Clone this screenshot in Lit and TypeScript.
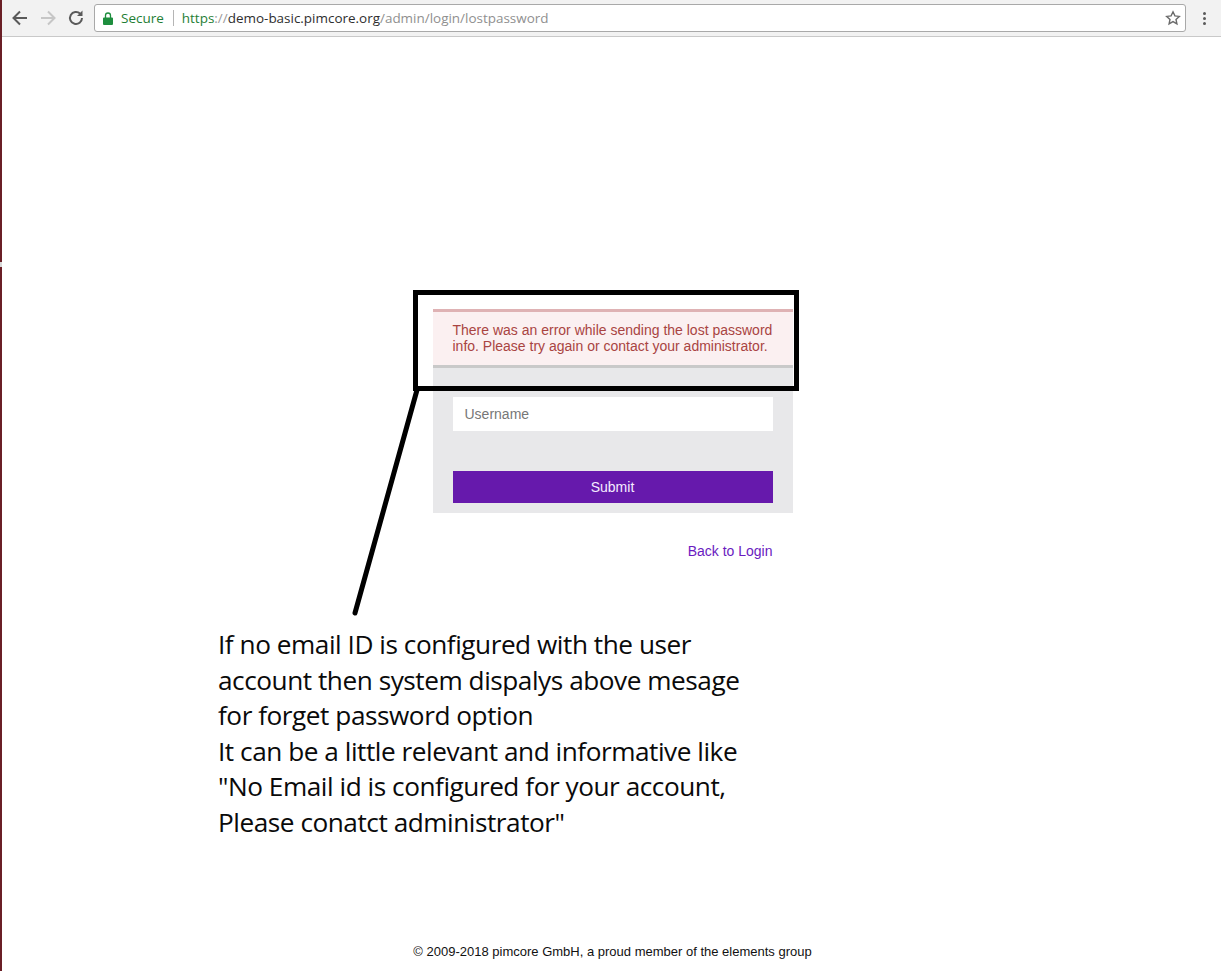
import { LitElement, html, css, svg } from "lit";
import { customElement } from "lit/decorators.js";

@customElement("app-root")
export class AppRoot extends LitElement {
  static styles = css`
    :host { display: block; position: relative; height: 971px; overflow: hidden; background: #fff; font-family: "Liberation Sans", Arial, sans-serif; }
    .edge { position: absolute; left: 0; top: 0; bottom: 0; width: 2px; background: #6a1f26; z-index: 3; }
    .notch { position: absolute; left: 0; top: 262px; width: 2px; height: 5px; background: #d8d8d8; }
    .toolbar { height: 36px; background: #f2f2f2; border-bottom: 1px solid #c9c9c9; display: flex; align-items: center; padding: 0 0 0 10px; box-sizing: content-box; }
    .nav { width: 20px; height: 20px; flex: none; margin-right: 8px; }
    .omni { flex: none; width: 1092px; height: 28px; box-sizing: border-box; background: #fff; border: 1px solid #a9a9a9; border-radius: 3px; display: flex; align-items: center; padding: 0 0 0 8px; font: 13.46px/20px "Open Sans", "Noto Sans", sans-serif; white-space: nowrap; }
    .lock { width: 10px; height: 13px; margin-right: 8px; flex: none; }
    .secure { color: #1e7e34; font-size: 13.5px; }
    .sep { width: 1px; height: 16px; background: #b5b5b5; margin: 0 8px 0 9px; }
    .https { color: #1e7e34; }
    .slashes { color: #9a9a9a; }
    .host { color: #2e2e2e; }
    .path { color: #8f8f8f; }
    .spacer { flex: 1; }
    .star { width: 16px; height: 16px; margin-right: 4px; }
    .menu { width: 4px; margin-left: 16px; display: flex; flex-direction: column; gap: 2px; align-items: center; }
    .menu i { width: 3px; height: 3px; background: #5a5a5a; border-radius: 50%; display: block; }
    .page { display: flex; flex-direction: column; align-items: center; padding-top: 272px; }
    .panel { width: 360px; margin-left: 4px; box-sizing: border-box; }
    .error { background: #fbf0f1; border-top: 3px solid #dfb2b4; border-bottom: 3px solid #c9c9c9; color: #a94442; font-size: 14px; line-height: 16px; padding: 10px 20px 10px; height: 59px; box-sizing: border-box; }
    .form { background: #e8e8ea; padding: 29px 20px 10px; display: flex; flex-direction: column; }
    .input { height: 34px; background: #fff; color: #777; font-size: 14px; line-height: 34px; padding-left: 12px; box-sizing: border-box; }
    .submit { height: 32px; margin-top: 40px; background: #6619ac; color: #f4ecff; font-size: 14px; line-height: 32px; text-align: center; }
    .back { display: block; text-align: right; padding: 30px 20px 0 0; font-size: 14px; line-height: 16px; color: #6a1bc0; text-decoration: none; }
    .footer { position: absolute; left: 4px; right: 0; top: 944px; text-align: center; font-size: 13px; line-height: 16px; color: #111; }
    .box { position: absolute; left: 413px; top: 290px; width: 386px; height: 101px; box-sizing: border-box; border: 5px solid #000; z-index: 2; }
    .line { position: absolute; left: 340px; top: 380px; width: 100px; height: 240px; z-index: 2; }
    .note { position: absolute; left: 218px; top: 627px; width: 560px; font: 26.2px/35.5px "Open Sans", "Noto Sans", sans-serif; color: #0a0a0a; letter-spacing: -0.46px; }
  `;

  render() {
    return html`
      <div class="edge"><div class="notch"></div></div>
      <div class="toolbar">
        <svg class="nav" viewBox="0 0 20 20" fill="none" stroke="#5a5a5a" stroke-width="2"><path d="M17 10H4M10 3.500 3.500 10l6.500 6.500"/></svg>
        <svg class="nav" viewBox="0 0 20 20" fill="none" stroke="#c6c6c6" stroke-width="2"><path d="M3 10h13M10 3.500l6.500 6.500-6.500 6.500"/></svg>
        <svg class="nav" viewBox="0 0 20 20" fill="none" stroke="#5a5a5a" stroke-width="2"><path d="M16 10a6 6 0 1 1-1.800-4.300"/><path d="M16.500 2.500v5.500H11" fill="#5a5a5a" stroke="none"/></svg>
        <div class="omni">
          <svg class="lock" viewBox="0 0 10 13"><path d="M1 5.500h8a1 1 0 0 1 1 1V12a1 1 0 0 1-1 1H1a1 1 0 0 1-1-1V6.500a1 1 0 0 1 1-1z" fill="#1e8e3e"/><path d="M2.500 6V3.500a2.500 2.500 0 0 1 5 0V6" fill="none" stroke="#1e8e3e" stroke-width="1.300"/></svg>
          <span class="secure">Secure</span><span class="sep"></span>
          <span class="https">https</span><span class="slashes">://</span><span class="host">demo-basic.pimcore.org</span><span class="path">/admin/login/lostpassword</span>
          <span class="spacer"></span>
          <svg class="star" viewBox="0 0 16 16" fill="none" stroke="#6a6a6a" stroke-width="1.400"><path d="M8 1.800l1.900 4.100 4.400.5-3.300 3 .9 4.400L8 11.600l-3.900 2.200.9-4.400-3.300-3 4.400-.5z"/></svg>
        </div>
        <div class="menu"><i></i><i></i><i></i></div>
      </div>
      <div class="page">
        <div class="panel">
          <div class="error">There was an error while sending the lost password info. Please try again or contact your administrator.</div>
          <div class="form">
            <div class="input">Username</div>
            <div class="submit">Submit</div>
          </div>
          <a class="back" href="#">Back to Login</a>
        </div>
      </div>
      <div class="box"></div>
      <svg class="line" viewBox="0 0 100 240">${svg`<path d="M77 10 15 233" stroke="#000" stroke-width="5" stroke-linecap="round" fill="none"/>`}</svg>
      <div class="note">If no email ID is configured with the user<br>account then system dispalys above mesage<br>for forget password option<br>It can be a little relevant and informative like<br>"No Email id is configured for your account,<br>Please conatct administrator"</div>
      <div class="footer">© 2009-2018 pimcore GmbH, a proud member of the elements group</div>
    `;
  }
}
